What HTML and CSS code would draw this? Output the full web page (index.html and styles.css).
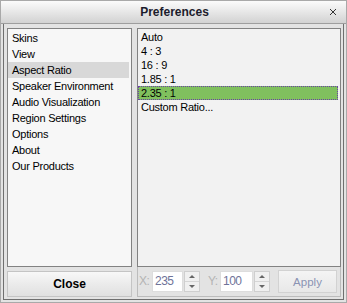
FILE: index.html
```html
<!DOCTYPE html>
<html>
<head>
<meta charset="utf-8">
<title>Preferences</title>
<link rel="stylesheet" href="styles.css">
</head>
<body>
<div class="window">
  <div class="titlebar">
    <span></span>
    <span class="title">Preferences</span>
    <svg class="xbtn" width="8" height="8" viewBox="0 0 8 8"><path d="M1 1 L7 7 M7 1 L1 7" stroke="#333" stroke-width="1" fill="none"/></svg>
  </div>
  <div class="frame">
    <div class="leftcol">
      <ul class="list cats">
        <li>Skins</li>
        <li>View</li>
        <li class="hl">Aspect Ratio</li>
        <li>Speaker Environment</li>
        <li>Audio Visualization</li>
        <li>Region Settings</li>
        <li>Options</li>
        <li>About</li>
        <li>Our Products</li>
      </ul>
      <button class="close">Close</button>
    </div>
    <div class="rightcol">
      <ul class="list ratios">
        <li>Auto</li>
        <li>4 : 3</li>
        <li>16 : 9</li>
        <li>1.85 : 1</li>
        <li class="sel">2.35 : 1</li>
        <li>Custom Ratio...</li>
      </ul>
      <div class="controls">
        <span class="lbl">X:</span>
        <span class="field w31">235</span>
        <span class="spin"><span class="up"></span><span class="down"></span></span>
        <span class="lbl ylbl">Y:</span>
        <span class="field w32">100</span>
        <span class="spin"><span class="up"></span><span class="down"></span></span>
        <button class="apply">Apply</button>
      </div>
    </div>
  </div>
</div>
</body>
</html>
```
FILE: styles.css
```css
* { box-sizing: border-box; }
html, body { margin: 0; padding: 0; }
body {
  width: 347px;
  height: 303px;
  font-family: "Liberation Sans", Arial, sans-serif;
  background: #d6d6d6;
}
.window {
  width: 347px;
  height: 303px;
  border: 1px solid #a9a9a9;
  background: #e3e3e3;
  display: flex;
  flex-direction: column;
}
.titlebar {
  height: 23px;
  flex: none;
  border-bottom: 1px solid #9e9e9e;
  background: linear-gradient(#fbfbfb, #e9e9e9 45%, #d2d2d2);
  display: grid;
  grid-template-columns: 1fr auto 1fr;
  align-items: center;
}
.title {
  font-weight: bold;
  font-size: 12px;
  color: #1c1c2c;
  padding-left: 2px;
  padding-bottom: 1px;
}
.xbtn {
  justify-self: end;
  margin-right: 9px;
  margin-bottom: 1px;
}
.frame {
  flex: 1;
  margin: 0 2px 2px;
  border: 1px solid #6f6f6f;
  border-top: none;
  padding: 4px 2px 2px 3px;
  display: flex;
  gap: 5px;
}
.leftcol {
  width: 125px;
  display: flex;
  flex-direction: column;
  gap: 4px;
}
.rightcol {
  width: 204px;
  display: flex;
  flex-direction: column;
}
.list {
  margin: 0;
  list-style: none;
  height: 239px;
  flex: none;
  border: 1px solid #828282;
  padding: 1px 2px 0 0;
  font-size: 11px;
  letter-spacing: -0.25px;
  color: #000;
}
.cats { background: #f7f7f7; }
.cats li {
  height: 16px;
  line-height: 16px;
  padding-left: 4px;
  white-space: nowrap;
}
.cats li.hl { background: #d8d8d8; }
.ratios { background: #f2f2f2; }
.ratios li {
  height: 14px;
  line-height: 14px;
  padding-left: 3px;
  white-space: nowrap;
}
.ratios li.sel {
  background: #80c05e;
  border: 1px dotted #6a3fa8;
  padding-left: 2px;
  line-height: 12px;
}
.close {
  height: 26px;
  flex: none;
  margin: 0;
  border: 1px solid #c4c4c4;
  border-radius: 0;
  background: linear-gradient(#f8f8f8, #ebebeb 50%, #e0e0e0);
  font-family: "Liberation Sans", Arial, sans-serif;
  font-weight: bold;
  font-size: 12px;
  color: #000;
  padding: 0;
}
.controls {
  flex: 1;
  border: 1px solid #bcbcbc;
  border-top: none;
  display: flex;
  align-items: flex-start;
  padding: 4px 0 0 1px;
}
.lbl {
  width: 13px;
  height: 21px;
  line-height: 21px;
  font-size: 12px;
  color: #b4b4b4;
  letter-spacing: -0.5px;
}
.ylbl { margin-left: 8px; width: 12px; }
.field {
  height: 21px;
  line-height: 19px;
  border: 1px solid #dddddd;
  background: #ffffff;
  font-size: 12px;
  letter-spacing: -0.5px;
  color: #6f7399;
  padding-left: 2px;
}
.w31 { width: 31px; }
.w32 { width: 33px; }
.spin {
  width: 16px;
  height: 21px;
  border: 1px solid #cfcfcf;
  background: #f0f0f0;
  margin-left: 1px;
  display: flex;
  flex-direction: column;
}
.spin .up, .spin .down {
  flex: 1;
  display: flex;
  align-items: center;
  justify-content: center;
}
.spin .up { border-bottom: 1px solid #d6d6d6; }
.spin .up::after {
  content: "";
  border-left: 3px solid transparent;
  border-right: 3px solid transparent;
  border-bottom: 3px solid #666;
}
.spin .down::after {
  content: "";
  border-left: 3px solid transparent;
  border-right: 3px solid transparent;
  border-top: 3px solid #666;
}
.apply {
  margin: -1px 0 0 8px;
  width: 59px;
  height: 23px;
  border: 1px solid #d2d2d2;
  border-radius: 0;
  background: linear-gradient(#f4f4f4, #e8e8e8);
  font-family: "Liberation Sans", Arial, sans-serif;
  font-size: 11.5px;
  color: #8a93b3;
  padding: 0;
}
```
